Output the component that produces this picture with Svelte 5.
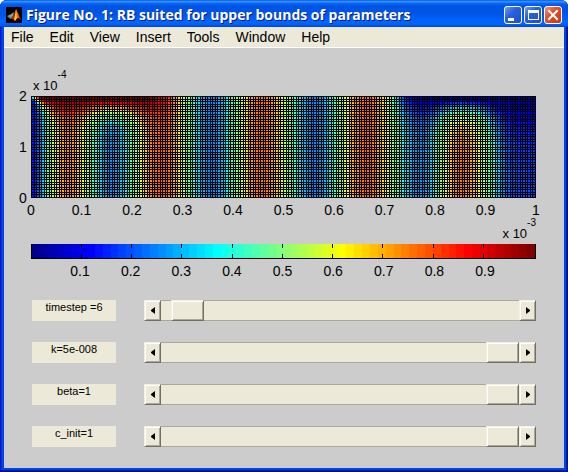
<script>
    const COLS = 200;
    const ROWS = 40;
    const LEVELS = 64;

    const menus = ['File', 'Edit', 'View', 'Insert', 'Tools', 'Window', 'Help'];
    const xTicks = ['0', '0.1', '0.2', '0.3', '0.4', '0.5', '0.6', '0.7', '0.8', '0.9', '1'];
    const yTicks = ['2', '1', '0'];
    const barTicks = xTicks.slice(1, -1);

    let params = $state([
        { name: 'timestep ', min: 1, max: 161, step: 1, value: 6 },
        { name: 'k', min: 0, max: 5e-8, step: 1e-9, value: 5e-8 },
        { name: 'beta', min: 0, max: 1, step: 0.01, value: 1 },
        { name: 'c_init', min: 0, max: 1, step: 0.01, value: 1 }
    ]);

    let canvas;
    let plotWidth = $state(0);
    let plotHeight = $state(0);

    // concentration along the lower edge: [x, value]
    const profile = [
        [-0.02, 0.05], [0.07, 0.72], [0.155, 0.27], [0.255, 0.77], [0.355, 0.26], [0.455, 0.75],
        [0.56, 0.26], [0.66, 0.76], [0.77, 0.27], [0.85, 0.74], [0.96, 0.2], [1.01, 0.18]
    ];

    function clamp(v) {
        return Math.max(0, Math.min(1, v));
    }

    function smooth(a, b, v) {
        const t = clamp((v - a) / (b - a));
        return t * t * (3 - 2 * t);
    }

    function base(x) {
        const i = profile.findIndex((p) => p[0] > x);
        const [x0, v0] = profile[i - 1];
        const [x1, v1] = profile[i];
        return v0 + (v1 - v0) * (1 - Math.cos((Math.PI * (x - x0)) / (x1 - x0))) / 2;
    }

    function field(x, row) {
        const v = base(x);
        if (x < 0.5) {
            const depth = 6 * Math.min(1, 0.15 + x / 0.05);
            const w = Math.exp(-Math.pow(row / depth, 1.5)) * (1 - smooth(0.22, 0.3, x));
            return v + (1 - v) * w * smooth(-0.01, 0.02, x);
        }
        const depth = 6.5 + 5 * smooth(0.88, 0.96, x);
        const w = Math.exp(-Math.pow(row / depth, 1.3)) * smooth(0.69, 0.78, x);
        return v + (0.04 - v) * w;
    }

    function jet(v) {
        const q = Math.min(LEVELS, Math.floor(clamp(v) * LEVELS) + 1) / LEVELS;
        const c = [3, 2, 1].map((k) => Math.round(255 * clamp(1.5 - Math.abs(4 * q - k))));
        return `rgb(${c.join(',')})`;
    }

    const barFill = 'linear-gradient(to right, ' + Array.from({ length: LEVELS }, (_, i) =>
        `${jet(i / LEVELS)} ${(i * 100) / LEVELS}% ${((i + 1) * 100) / LEVELS}%`
    ).join(', ') + ')';

    function format(v) {
        if (v === 0 || v >= 0.001) return String(v);
        const [m, e] = v.toExponential().split('e-');
        return `${Number(Number(m).toFixed(4))}e-${e.padStart(3, '0')}`;
    }

    function nudge(p, dir) {
        p.value = Math.max(p.min, Math.min(p.max, p.value + dir * p.step));
    }

    $effect(() => {
        if (!plotWidth || !plotHeight) return;
        canvas.width = plotWidth;
        canvas.height = plotHeight;
        const ctx = canvas.getContext('2d');
        ctx.fillStyle = '#000';
        ctx.fillRect(0, 0, plotWidth, plotHeight);
        for (let i = 0; i < COLS; i++) {
            const left = Math.round((i * (plotWidth - 1)) / COLS) + 1;
            const right = Math.round(((i + 1) * (plotWidth - 1)) / COLS);
            for (let j = 0; j < ROWS; j++) {
                const top = Math.round((j * (plotHeight - 1)) / ROWS) + 1;
                const bottom = Math.round(((j + 1) * (plotHeight - 1)) / ROWS);
                ctx.fillStyle = jet(field(i / COLS, j));
                ctx.fillRect(left, top, right - left, bottom - top);
            }
        }
    });
</script>

<div class="window">
    <header class="titlebar">
        <svg class="logo" viewBox="0 0 16 16" aria-hidden="true">
            <rect width="16" height="16" fill="#000" />
            <path d="M1 9 L5 7 L8 5 L7 9 L5 12 L3 11 Z" fill="#5c8a92" />
            <path d="M3 9 L8 6 L6 10 Z" fill="#91a9aa" />
            <path d="M5 12 L8 7 L10 2 L12 6 L15 13 L12 11 L9 14 L7 12 Z" fill="#b72208" />
            <path d="M10 2 L11 6 L11 11 L9 14 L8 12 L9 8 Z" fill="#ffca18" />
            <path d="M10 2 L12 7 L13 11 L11 11 Z" fill="#f36b0c" />
        </svg>
        <h1>Figure No. 1: RB suited for upper bounds of parameters</h1>
        <div class="controls">
            <button class="control" aria-label="Minimize">
                <svg viewBox="0 0 16 16"><path d="M3 11h6v3H3z" fill="#fff" /></svg>
            </button>
            <button class="control" aria-label="Maximize">
                <svg viewBox="0 0 16 16"><path d="M3 3h11v10H3z M4 6v6h9V6z" fill="#fff" fill-rule="evenodd" /></svg>
            </button>
            <button class="control close" aria-label="Close">
                <svg viewBox="0 0 16 16"><path d="M4 4L12 12M12 4L4 12" stroke="#fff" stroke-width="2" stroke-linecap="square" /></svg>
            </button>
        </div>
    </header>

    <nav class="menubar">
        {#each menus as menu}
            <button>{menu}</button>
        {/each}
    </nav>

    <main>
        <div class="exponent">x 10<sup>-4</sup></div>
        <div class="plot">
            <div class="y-axis">
                {#each yTicks as tick}
                    <span>{tick}</span>
                {/each}
            </div>
            <div class="surface" bind:clientWidth={plotWidth} bind:clientHeight={plotHeight}>
                <canvas bind:this={canvas}></canvas>
            </div>
        </div>
        <div class="axis">
            {#each xTicks as tick}
                <span>{tick}</span>
            {/each}
        </div>
        <div class="exponent end">x 10<sup>-3</sup></div>

        <div class="colorbar" style:background-image={barFill}>
            {#each barTicks as tick}
                <i></i>
            {/each}
        </div>
        <div class="axis bar-axis">
            {#each barTicks as tick}
                <span>{tick}</span>
            {/each}
        </div>

        <div class="params">
            {#each params as p, i}
                <div class="param">
                    <label for="param-{i}">{p.name}={format(p.value)}</label>
                    <div class="slider">
                        <button aria-label="Decrease {p.name}" onclick={() => nudge(p, -1)}>
                            <svg viewBox="0 0 4 7"><path d="M4 0v7L0 4V3z" /></svg>
                        </button>
                        <input id="param-{i}" type="range" min={p.min} max={p.max} step={p.step} bind:value={p.value} />
                        <button aria-label="Increase {p.name}" onclick={() => nudge(p, 1)}>
                            <svg viewBox="0 0 4 7"><path d="M0 0v7L4 4V3z" /></svg>
                        </button>
                    </div>
                </div>
            {/each}
        </div>
    </main>
</div>

<style>
    :global(body) {
        margin: 0;
        background: #fff;
    }

    .window {
        box-sizing: border-box;
        min-height: 100vh;
        display: flex;
        flex-direction: column;
        padding: 0 4px 4px;
        background: #0046e6;
        box-shadow: inset -1px -1px #00138c, inset 1px 0 #0019cf, inset -2px -2px #001ea0, inset 2px 0 #0831d9;
        border-radius: 7px 7px 0 0;
        font-family: "Liberation Sans", Arial, sans-serif;
        font-size: 14px;
        color: #000;
    }

    .titlebar {
        height: 27px;
        box-sizing: border-box;
        margin: 0 -4px;
        padding: 3px 6px 0;
        display: flex;
        align-items: center;
        gap: 4px;
        border-radius: 7px 7px 0 0;
        background: linear-gradient(#0058e6, #3a93ff 6%, #0a6af5 12%, #0054e3 22%, #0055e5 50%, #0066ff 80%, #0062f8 90%, #0046cf);
    }

    .logo {
        width: 16px;
        height: 16px;
    }

    h1 {
        flex: 1;
        margin: 0;
        font-family: "Open Sans", "Noto Sans", sans-serif;
        font-size: 14px;
        font-weight: 700;
        line-height: 18px;
        white-space: nowrap;
        color: #fff;
        text-shadow: 1px 1px #0a1883;
    }

    .controls {
        display: flex;
        gap: 2px;
    }

    .control {
        width: 18px;
        height: 18px;
        padding: 0;
        display: flex;
        border: 1px solid #fff;
        border-radius: 3px;
        background: linear-gradient(135deg, #6f9cf5, #2a5fe0 40%, #1c4fd2);
    }

    .control svg {
        width: 16px;
        height: 16px;
    }

    .close {
        background: linear-gradient(135deg, #f0957c, #e0502c 40%, #c63a12);
    }

    .menubar {
        height: 20px;
        display: flex;
        align-items: center;
        gap: 16px;
        padding-left: 7px;
        background: #ece9d8;
        border-bottom: 1px solid #fff;
    }

    .menubar button {
        padding: 0;
        border: none;
        background: none;
        font: inherit;
        line-height: 20px;
        color: inherit;
    }

    main {
        flex: 1;
        padding: 20px 28px 21px 27px;
        background: #ccc;
    }

    .exponent {
        height: 28px;
        box-sizing: border-box;
        display: flex;
        align-items: flex-end;
        padding: 0 0 2px 2px;
        font-size: 13px;
        line-height: 16px;
        white-space: pre;
    }

    .exponent.end {
        justify-content: flex-end;
        margin-top: -2px;
    }

    .exponent sup {
        align-self: flex-start;
        font-size: 10px;
        line-height: 14px;
        vertical-align: baseline;
    }

    .plot {
        display: flex;
        margin-left: -12px;
    }

    .y-axis {
        width: 12px;
        display: flex;
        flex-direction: column;
        justify-content: space-between;
    }

    .y-axis span {
        height: 0;
        display: flex;
        align-items: center;
    }

    .surface {
        flex: 1;
        min-width: 0;
        height: 102px;
        overflow: hidden;
    }

    canvas {
        display: block;
    }

    .axis {
        display: flex;
        justify-content: space-between;
        padding-top: 4px;
        line-height: 16px;
    }

    .axis span {
        width: 0;
        display: flex;
        justify-content: center;
    }

    .colorbar,
    .bar-axis {
        padding-left: 9.7%;
        padding-right: 10.1%;
    }

    .colorbar {
        height: 15px;
        box-sizing: border-box;
        display: flex;
        justify-content: space-between;
        border: solid #000;
        border-width: 0 1px 1px;
    }

    .colorbar i {
        width: 1px;
        height: 14px;
        box-sizing: border-box;
        border: solid #000;
        border-width: 4px 0;
    }

    .params {
        display: flex;
        flex-direction: column;
        gap: 21px;
        margin-top: 21px;
    }

    .param {
        display: flex;
        gap: 28px;
        padding-left: 1px;
    }

    label {
        width: 84px;
        height: 21px;
        background: #ece9d8;
        font-size: 11px;
        line-height: 15px;
        text-align: center;
    }

    .slider {
        flex: 1;
        min-width: 0;
        height: 21px;
        display: flex;
    }

    .slider button {
        width: 17px;
        height: 21px;
        padding: 0;
        display: flex;
        align-items: center;
        justify-content: center;
        border: 1px solid;
        border-color: #f1efe2 #716f64 #716f64 #f1efe2;
        background: #ece9d8;
        box-shadow: inset 1px 1px #fff, inset -1px -1px #aca899;
    }

    .slider button svg {
        width: 4px;
        height: 7px;
    }

    input {
        appearance: none;
        flex: 1;
        min-width: 0;
        height: 21px;
        box-sizing: border-box;
        margin: 0;
        background: #ece9d8;
        box-shadow: inset 0 1px #aca899, inset 0 -1px #aca899;
    }

    input::-webkit-slider-thumb {
        appearance: none;
        box-sizing: border-box;
        width: 33px;
        height: 21px;
        border: 1px solid;
        border-color: #f1efe2 #716f64 #716f64 #f1efe2;
        background: #ece9d8;
        box-shadow: inset 1px 1px #fff, inset -1px -1px #aca899;
    }
</style>
